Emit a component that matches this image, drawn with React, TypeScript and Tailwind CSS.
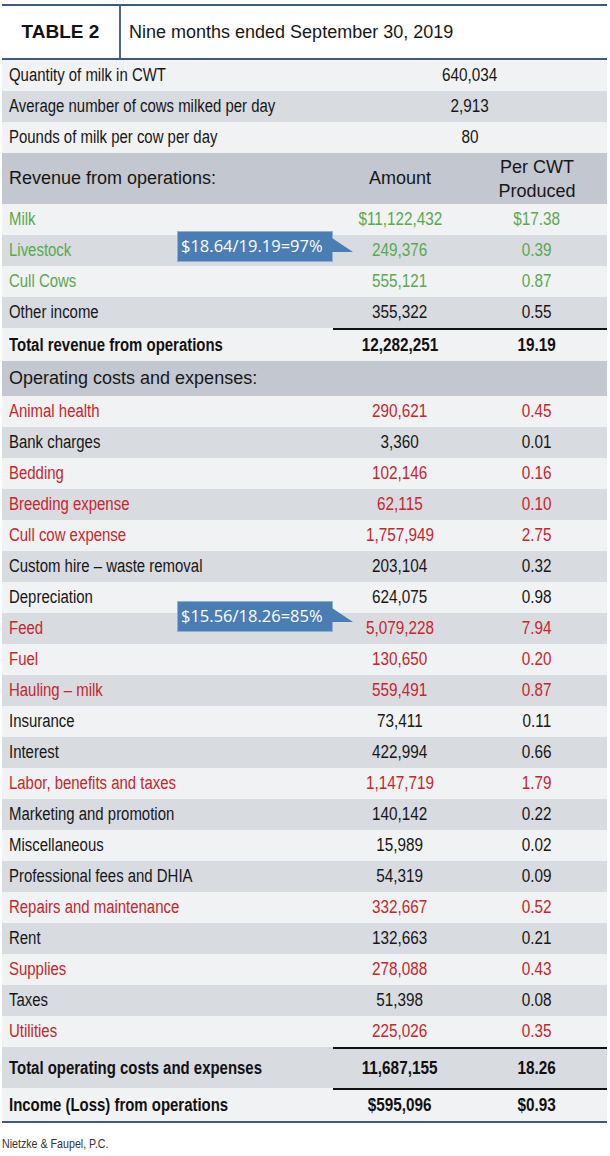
type Line = {
  label: string;
  amount: string;
  per: string;
  tone?: "green" | "red";
};

const revenue: Line[] = [
  { label: "Milk", amount: "$11,122,432", per: "$17.38", tone: "green" },
  { label: "Livestock", amount: "249,376", per: "0.39", tone: "green" },
  { label: "Cull Cows", amount: "555,121", per: "0.87", tone: "green" },
  { label: "Other income", amount: "355,322", per: "0.55" },
];

const costs: Line[] = [
  { label: "Animal health", amount: "290,621", per: "0.45", tone: "red" },
  { label: "Bank charges", amount: "3,360", per: "0.01" },
  { label: "Bedding", amount: "102,146", per: "0.16", tone: "red" },
  { label: "Breeding expense", amount: "62,115", per: "0.10", tone: "red" },
  { label: "Cull cow expense", amount: "1,757,949", per: "2.75", tone: "red" },
  { label: "Custom hire – waste removal", amount: "203,104", per: "0.32" },
  { label: "Depreciation", amount: "624,075", per: "0.98" },
  { label: "Feed", amount: "5,079,228", per: "7.94", tone: "red" },
  { label: "Fuel", amount: "130,650", per: "0.20", tone: "red" },
  { label: "Hauling – milk", amount: "559,491", per: "0.87", tone: "red" },
  { label: "Insurance", amount: "73,411", per: "0.11" },
  { label: "Interest", amount: "422,994", per: "0.66" },
  { label: "Labor, benefits and taxes", amount: "1,147,719", per: "1.79", tone: "red" },
  { label: "Marketing and promotion", amount: "140,142", per: "0.22" },
  { label: "Miscellaneous", amount: "15,989", per: "0.02" },
  { label: "Professional fees and DHIA", amount: "54,319", per: "0.09" },
  { label: "Repairs and maintenance", amount: "332,667", per: "0.52", tone: "red" },
  { label: "Rent", amount: "132,663", per: "0.21" },
  { label: "Supplies", amount: "278,088", per: "0.43", tone: "red" },
  { label: "Taxes", amount: "51,398", per: "0.08" },
  { label: "Utilities", amount: "225,026", per: "0.35", tone: "red" },
];

// no condensed face installed, so squeeze the regular one
function Label({ children }: { children: React.ReactNode }) {
  return (
    <span className="w-[331px] pl-[7px]">
      <span className="inline-block origin-left scale-x-[0.83] whitespace-nowrap">{children}</span>
    </span>
  );
}

function Num({ children, wide }: { children: React.ReactNode; wide?: boolean }) {
  return (
    <span className={wide ? "flex-1 text-center" : "w-[134px] text-center"}>
      <span className="inline-block origin-center scale-x-[0.85] whitespace-nowrap">{children}</span>
    </span>
  );
}

function DataRow({ line, shaded }: { line: Line; shaded: boolean }) {
  const color =
    line.tone === "green" ? "text-[#5aa94f]" : line.tone === "red" ? "text-[#c6262e]" : "text-[#171717]";
  return (
    <div className={`flex h-[31px] items-center text-[18px] ${color} ${shaded ? "bg-[#d8dbe0]" : "bg-[#f1f2f4]"}`}>
      <Label>{line.label}</Label>
      <Num>{line.amount}</Num>
      <Num wide>{line.per}</Num>
    </div>
  );
}

function InfoRow({ label, value, shaded }: { label: string; value: string; shaded: boolean }) {
  return (
    <div className={`flex h-[31px] items-center text-[18px] text-[#171717] ${shaded ? "bg-[#d8dbe0]" : "bg-[#f1f2f4]"}`}>
      <Label>{label}</Label>
      <Num wide>{value}</Num>
    </div>
  );
}

function TotalRow({ label, amount, per, shaded, tall }: { label: string; amount: string; per: string; shaded: boolean; tall?: boolean }) {
  return (
    <div className={shaded ? "bg-[#d8dbe0]" : "bg-[#f1f2f4]"}>
      <div className="ml-[331px] h-[2px] bg-[#111]" />
      <div className={`flex items-center text-[18px] font-bold text-[#111] ${tall ? "h-[39px]" : "h-[31px]"}`}>
        <Label>{label}</Label>
        <Num>{amount}</Num>
        <Num wide>{per}</Num>
      </div>
    </div>
  );
}

function Callout({ text, top }: { text: string; top: number }) {
  return (
    <div className="absolute left-[177px] flex" style={{ top }}>
      <div className="flex h-[31px] w-[156px] items-center border border-[#8fb0d3] bg-[#4a7db4] pl-[3px] font-['Open_Sans',sans-serif] text-[16.5px] text-white">
        {text}
      </div>
      <svg width="22" height="31" viewBox="0 0 22 31" className="-ml-[1px]">
        <polygon points="0,7 21,21 0,21" fill="#4a7db4" />
      </svg>
    </div>
  );
}

export default function App() {
  return (
    <div className="relative h-[1156px] w-[610px] bg-white font-['Liberation_Sans',Arial,sans-serif]">
      <div className="pt-[4px]">
        <div className="ml-[2px] mr-[3px] h-[2px] bg-[#3e5a78]" />
        <div className="ml-[2px] mr-[3px] flex h-[52px] items-center">
          <div className="flex h-full w-[119px] items-center justify-center border-r-[2px] border-[#4d6a88] text-[19px] font-bold text-[#111]">
            TABLE 2
          </div>
          <div className="pl-[8px] text-[18px] text-[#171717]">Nine months ended September 30, 2019</div>
        </div>
        <div className="ml-[2px] mr-[3px] h-[2px] bg-[#3e5a78]" />

        <div className="ml-[2px] mr-[3px]">
          <InfoRow label="Quantity of milk in CWT" value="640,034" shaded={false} />
          <InfoRow label="Average number of cows milked per day" value="2,913" shaded />
          <InfoRow label="Pounds of milk per cow per day" value="80" shaded={false} />

          <div className="flex h-[51px] items-center bg-[#c2c7d0] text-[18px] text-[#171717]">
            <span className="w-[331px] pl-[7px]">Revenue from operations:</span>
            <span className="w-[134px] text-center">Amount</span>
            <span className="flex-1 text-center leading-[24px]">
              Per CWT
              <br />
              Produced
            </span>
          </div>

          {revenue.map((line, i) => (
            <DataRow key={line.label} line={line} shaded={i % 2 === 1} />
          ))}
          <TotalRow label="Total revenue from operations" amount="12,282,251" per="19.19" shaded={false} />

          <div className="flex h-[35px] items-center bg-[#c2c7d0] pl-[7px] text-[18px] text-[#171717]">
            Operating costs and expenses:
          </div>

          {costs.map((line, i) => (
            <DataRow key={line.label} line={line} shaded={i % 2 === 1} />
          ))}
          <TotalRow label="Total operating costs and expenses" amount="11,687,155" per="18.26" shaded tall />
          <TotalRow label="Income (Loss) from operations" amount="$595,096" per="$0.93" shaded={false} />
        </div>
        <div className="ml-[2px] mr-[3px] h-[2px] bg-[#3e5a78]" />

        <p className="mt-[11px] pl-[2px] text-[13px] text-[#333]">
          <span className="inline-block origin-left scale-x-[0.82] whitespace-nowrap">Nietzke &amp; Faupel, P.C.</span>
        </p>
      </div>

      <Callout text="$18.64/19.19=97%" top={231} />
      <Callout text="$15.56/18.26=85%" top={601} />
    </div>
  );
}
